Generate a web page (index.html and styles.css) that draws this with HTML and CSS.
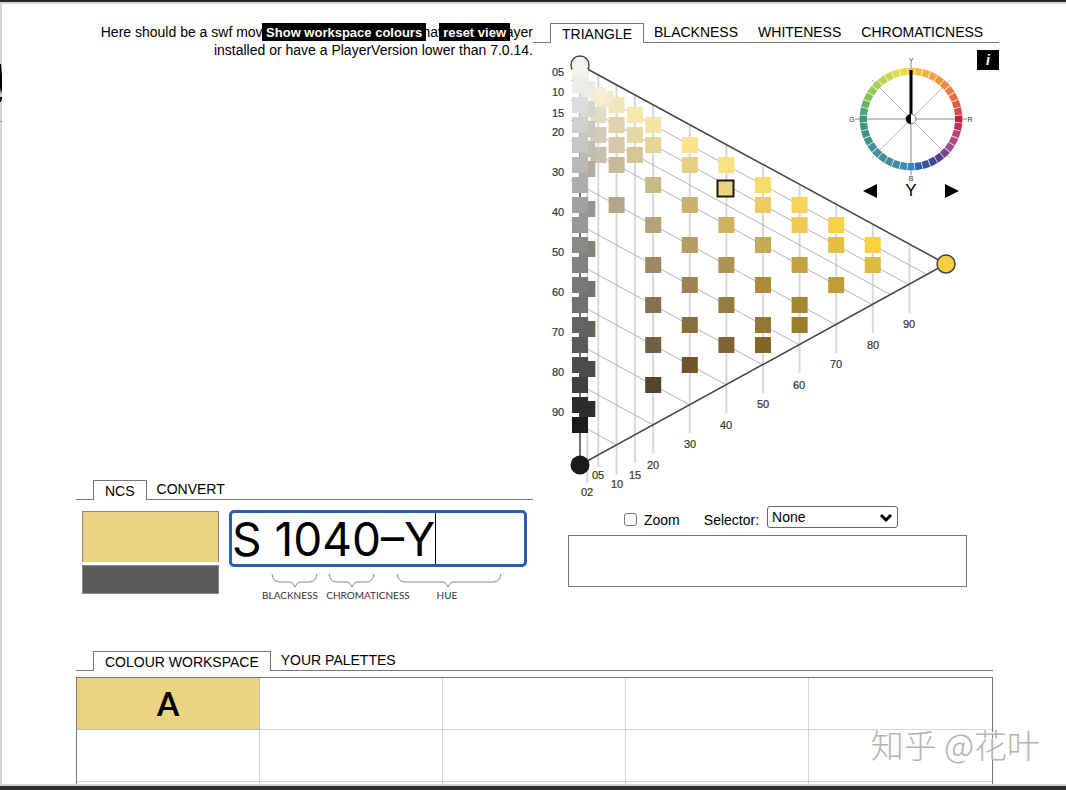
FILE: index.html
```
<!DOCTYPE html>
<html lang="en">
<head>
<meta charset="utf-8">
<title>Colour navigator</title>
<link rel="stylesheet" href="styles.css">
</head>
<body>
<div class="window">
  <main class="page">
    <div class="columns">
      <section class="left">
        <div class="notice">
          <p class="notice-text">Here should be a swf movie, but you probably don't have Flash player<br>installed or have a PlayerVersion lower than 7.0.14.</p>
          <div class="notice-actions">
            <button class="black-button" type="button">Show workspace colours</button>
            <button class="black-button" type="button">reset view</button>
          </div>
        </div>
        <nav class="tabs">
          <a class="tab tab-active" href="#ncs">NCS</a>
          <a class="tab" href="#convert">CONVERT</a>
        </nav>
        <div class="notation">
          <div class="swatches">
            <div class="swatch swatch-colour"></div>
            <div class="swatch swatch-grey"></div>
          </div>
          <div class="entry">
            <div class="code-box">
              <input class="code-input" type="text" value="S 1040–Y" aria-label="NCS notation">
              <span class="caret"></span>
            </div>
            <svg class="braces" viewBox="229 570 298 32" role="img" aria-label="Parts of the notation">
              <g class="brace">
                <path d="M272 574q1 8 8 8h10q3 0 5 5q2-5 5-5h9q7 0 8-8"/>
                <path d="M329 574q1 8 8 8h10q3 0 5 5q2-5 5-5h9q7 0 8-8"/>
                <path d="M397 574q1 8 8 8h38q3 0 5 5q2-5 5-5h40q7 0 8-8"/>
              </g>
              <text x="290" y="599">BLACKNESS</text>
              <text x="368" y="599">CHROMATICNESS</text>
              <text x="447" y="599">HUE</text>
            </svg>
          </div>
        </div>
      </section>
      <section class="right">
        <nav class="tabs tabs-wide">
          <a class="tab tab-active" href="#triangle">TRIANGLE</a>
          <a class="tab" href="#blackness">BLACKNESS</a>
          <a class="tab" href="#whiteness">WHITENESS</a>
          <a class="tab" href="#chromaticness">CHROMATICNESS</a>
        </nav>
        <div class="diagram">
          <svg class="triangle" id="triangle" viewBox="533 43 466 457" role="img" aria-label="NCS colour triangle"></svg>
          <button class="info" type="button" aria-label="Information">i</button>
          <div class="hue">
            <svg class="wheel" id="wheel" viewBox="-62 -63 124 126" role="img" aria-label="NCS colour circle"></svg>
            <div class="hue-nav">
              <button class="arrow" type="button" aria-label="Previous hue"><svg viewBox="0 0 14 14"><path d="M0 7 14 0v14z"/></svg></button>
              <span>Y</span>
              <button class="arrow" type="button" aria-label="Next hue"><svg viewBox="0 0 14 14"><path d="M14 7 0 0v14z"/></svg></button>
            </div>
          </div>
        </div>
        <div class="options">
          <label class="check"><input type="checkbox">Zoom</label>
          <label class="selector-label" for="selector">Selector:</label>
          <span class="select-wrap">
            <select id="selector"><option>None</option></select>
            <svg viewBox="0 0 14 10"><path d="M2 2l5 5 5-5"/></svg>
          </span>
        </div>
        <div class="result"></div>
      </section>
    </div>
    <section class="workspace">
      <nav class="tabs">
        <a class="tab tab-active" href="#workspace">COLOUR WORKSPACE</a>
        <a class="tab" href="#palettes">YOUR PALETTES</a>
      </nav>
      <table class="cells">
        <tr><td class="filled">A</td><td></td><td></td><td></td><td></td></tr>
        <tr><td></td><td></td><td></td><td></td><td></td></tr>
        <tr><td></td><td></td><td></td><td></td><td></td></tr>
      </table>
    </section>
  </main>
  <svg class="edge" viewBox="0 0 3 70" aria-hidden="true"><path class="edge-ink" d="M0 4h1l1 12v14l-1 4-1-6zM0 37h2v2l-1 3H0z"/><path class="edge-line" d="M0 61.500h2"/></svg>
  <div class="watermark" lang="zh">知乎 @花叶</div>
</div>
<script src="diagram.js"></script>
</body>
</html>
```
FILE: styles.css
```
* { box-sizing: border-box; }
body {
  margin: 0;
  background: #fff;
  color: #000;
  font-family: "Liberation Sans", Arial, sans-serif;
  font-size: 14px;
}
button, input, select { font: inherit; color: inherit; }
a { color: inherit; text-decoration: none; }
.window {
  position: relative;
  height: 100vh;
  display: flex;
  flex-direction: column;
  border-top: 2px solid #2c2a29;
  border-bottom: 4px solid #2f302f;
}
.page {
  flex: 1;
  min-height: 0;
  overflow: hidden;
  border: solid #d6d5d2;
  border-width: 2px 0 2px 2px;
  padding: 19px 67px 0 74px;
}
.columns {
  display: grid;
  grid-template-columns: 457fr 466fr;
  align-items: start;
}
.notice {
  position: relative;
  min-height: 457px;
  text-align: right;
}
.notice-text { margin: 0; line-height: 18px; white-space: nowrap; }
.notice-actions {
  position: absolute;
  top: 0;
  right: 23px;
  display: flex;
  gap: 13px;
}
.black-button {
  border: 0;
  padding: 0 4px;
  height: 18px;
  background: #000;
  color: #fff;
  font-size: 13px;
  font-weight: 700;
  white-space: nowrap;
}
.tabs {
  display: flex;
  height: 20px;
  padding-left: 17px;
  border-bottom: 1px solid #777;
  line-height: 18px;
}
.tab { padding: 0 10px; height: 19px; white-space: nowrap; }
.tab-active {
  height: 20px;
  padding: 0 11px;
  border: 1px solid #777;
  border-bottom: 0;
  background: #fff;
  line-height: 20px;
}
.notation {
  display: grid;
  grid-template-columns: 137px 1fr;
  gap: 10px;
  padding: 10px 6px 0;
}
.swatches { padding-top: 1px; }
.swatch { border: 1px solid #888; }
.swatch-colour { height: 51px; background: #ebd383; border-bottom: 0; }
.swatch-grey { height: 29px; margin-top: 3px; background: #5c5b59; }
.code-box { position: relative; }
.code-input {
  display: block;
  width: 100%;
  height: 57px;
  border: 3px solid #2a5db0;
  border-radius: 5px;
  padding: 0;
  background: #fff;
  font-family: Inter, sans-serif;
  font-size: 46px;
}
.caret {
  position: absolute;
  left: 206px;
  top: 3px;
  bottom: 3px;
  width: 1px;
  background: #000;
}
.braces { display: block; width: 298px; height: 32px; margin-top: 3px; }
.braces text { font: 10px Lato, sans-serif; text-anchor: middle; fill: #333; }
.brace { fill: none; stroke: #888; }
.diagram { position: relative; height: 457px; }
.triangle { display: block; width: 466px; height: 457px; }
.triangle text { font: 11px "Liberation Sans", Arial, sans-serif; text-anchor: middle; fill: #333; stroke: #333; stroke-width: .2; }
.vertical { stroke: #d8d8d8; stroke-width: 2; }
.slanted { stroke: #b4b4b4; stroke-width: 1; }
.tick { stroke: #aaa; }
.outline { fill: none; stroke: #444; stroke-width: 1.5; }
.info {
  position: absolute;
  top: 7px;
  right: 0;
  width: 22px;
  height: 20px;
  border: 0;
  padding: 0;
  background: #000;
  color: #fff;
  font-weight: 700;
  font-style: italic;
}
.hue { position: absolute; top: 13px; right: 26px; width: 124px; }
.wheel { display: block; width: 124px; height: 126px; }
.wheel text { font: 7px "Liberation Sans", Arial, sans-serif; text-anchor: middle; fill: #333; }
.hue-nav {
  display: flex;
  justify-content: space-between;
  align-items: center;
  padding: 0 14px;
  height: 18px;
  font-size: 17px;
}
.arrow { border: 0; padding: 0; background: none; width: 14px; height: 14px; }
.arrow svg { display: block; width: 14px; height: 14px; }
.options { display: flex; align-items: center; height: 34px; padding-left: 91px; }
.check { display: flex; align-items: center; gap: 7px; margin-right: 24px; }
.check, .selector-label { padding-top: 5px; }
.check input {
  appearance: none;
  width: 13px;
  height: 13px;
  margin: 0;
  border: 1px solid #767676;
  border-radius: 3px;
  background: #fff;
}
.select-wrap { position: relative; margin-left: 8px; }
.select-wrap svg { position: absolute; right: 5px; top: 7px; width: 14px; height: 10px; fill: none; stroke: #000; stroke-width: 3; pointer-events: none; }
.select-wrap select {
  appearance: none;
  display: block;
  width: 131px;
  height: 22px;
  border: 1px solid #666;
  border-radius: 3px;
  padding: 0 4px;
  background: #fff;
}
.result { height: 52px; margin: 1px 32px 0 35px; border: 1px solid #777; }
.workspace { margin-right: 6px; padding-top: 49px; }
.cells {
  width: 100%;
  margin-top: 6px;
  table-layout: fixed;
  border-collapse: separate;
  border-spacing: 0;
  border: 1px solid #777;
}
.cells td {
  height: 52px;
  padding: 0;
  border: solid #d4d4d4;
  border-width: 0 1px 1px 0;
  text-align: center;
  font: 700 32px/50px Lato, sans-serif;
}
.cells td:last-child { border-right: 0; }
.cells .filled { background: #ebd383; border-color: #bbb; }
.edge { position: absolute; left: 0; top: 58px; width: 3px; height: 70px; }
.edge-ink { fill: #000; }
.edge-line { stroke: #888; }
.watermark {
  position: absolute;
  right: 26px;
  bottom: 22px;
  color: #b4b4b4;
  font: 300 33px/40px "Noto Sans CJK SC", sans-serif;
  text-shadow: 1px -1px 0 #fff, 2px -1px 0 #fff;
}
```
FILE: diagram.js
```
// Draws the NCS triangle and the colour circle.
const ORIGIN = { x: 580, y: 65 };
const place = (s, c) => [ORIGIN.x + c * 3.66, ORIGIN.y + s * 4 + c * 2];

// chromaticness: { blackness: colour }
const samples = {
  0: { 3: '#f5f2ec', 5: '#ececea', 10: '#dcdcdc', 15: '#cfcfcf', 20: '#c5c5c6', 25: '#b9b9ba', 30: '#adadad', 35: '#a1a1a2', 40: '#979798', 45: '#8a8a8b', 50: '#828283', 55: '#78787a', 60: '#707072', 65: '#646466', 70: '#5a5a5b', 75: '#4b4b4c', 80: '#404040', 85: '#2c2c2d', 90: '#1b1b1b' },
  2: { 5: '#eeebe4', 10: '#d8d5cf', 15: '#c9c6c0', 20: '#bfbcb5', 25: '#b0aca5', 35: '#98958f', 45: '#85827b', 55: '#75736c', 65: '#64625b', 75: '#4c4a46', 85: '#302e2a' },
  5: { 5: '#f6eed7', 10: '#e3dcc9', 15: '#d3ccba', 20: '#c8c0ae' },
  7: { 5: '#f5ebc9' },
  10: { 5: '#f3e6bd', 10: '#dfd3ae', 15: '#d4c8a8', 20: '#c9bb99', 30: '#b5a68a' },
  15: { 5: '#f8e8a9', 10: '#e5d8a8', 15: '#d5c793' },
  20: { 5: '#f5e4a5', 10: '#e5d595', 20: '#c9bb88', 30: '#b2a474', 40: '#9c8a62', 50: '#85734f', 60: '#716041', 70: '#53452b' },
  30: { 5: '#f9e38d', 10: '#e4cf82', 20: '#c9b16d', 30: '#b29c61', 40: '#9c8351', 50: '#85703b', 60: '#6f5529' },
  40: { 5: '#fbe180', 20: '#d0b263', 30: '#ad9451', 40: '#987b3e', 50: '#806431' },
  50: { 5: '#f8da6d', 10: '#eacb64', 20: '#c5a953', 30: '#ae8b39', 40: '#957634', 45: '#826827' },
  60: { 5: '#f9d45c', 10: '#edca55', 20: '#c3a141', 30: '#a58635', 35: '#9c7d2b' },
  70: { 5: '#f8d144', 10: '#e4bf43', 20: '#c09c34' },
  80: { 5: '#fad13f', 10: '#debb42' }
};

const line = (a, b, cls) => `<path class="${cls}" d="M${a}L${b}"/>`;
const tails = { 2: 22, 5: 12, 10: 30, 15: 28 };
let out = '';
for (const c of [2, 5, 10, 15, 20, 30, 40, 50, 60, 70, 80, 90]) {
  const end = place(100 - c, c);
  out += line(place(0, c), [end[0], end[1] + (tails[c] || 28)], 'vertical');
}
for (const s of [5, 10, 15, 20, 30, 40, 50, 60, 70, 80, 90]) {
  out += line(place(s, 0), place(s, 100 - s), 'slanted');
  out += line([571, 60.5 + s * 4], [580, 60.5 + s * 4], 'tick');
  out += `<text x="558" y="${56 + s * 4 + (s === 15 ? 1 : 0)}">${String(s).padStart(2, '0')}</text>`;
}
out += '<path class="outline" d="M580 65 946 264 580 465z"/><circle class="outline" cx="580" cy="65" r="9"/>';
for (const c of Object.keys(samples).map(Number).sort((a, b) => b - a)) {
  for (const [s, fill] of Object.entries(samples[c])) {
    const [x, y] = place(Number(s), c);
    out += `<rect x="${x - 8}" y="${y - 8}" width="16" height="16" fill="${fill}"/>`;
  }
}
out += '<circle cx="580" cy="65" r="8" fill="#f4f2ed"/>';
out += '<rect x="717.500" y="180.500" width="16" height="16" fill="#ebd383" stroke="#1c1a12" stroke-width="2"/>';
out += '<circle cx="946" cy="264" r="9" fill="#f6cf45" stroke="#444" stroke-width="1.500"/><circle cx="580" cy="465" r="9.500" fill="#1b1b1b"/>';
const labels = { 2: [587, 492], 5: [598, 475], 10: [617, 484], 15: [635, 475], 20: [653, 465], 30: [690, 444], 40: [726, 425], 50: [763, 404], 60: [799, 385], 70: [836, 364], 80: [873, 345], 90: [909, 324] };
for (const [c, [x, y]] of Object.entries(labels)) {
  out += `<text x="${x}" y="${y + 4}">${c.padStart(2, '0')}</text>`;
}
document.getElementById('triangle').innerHTML = out;

const hues = ['#f6c53a', '#f5bd42', '#f3b044', '#f0a344', '#ee9744', '#ec8b42', '#eb7d42', '#e86d42', '#e45d42', '#dc4c4c', '#bf2245',
  '#bd2f5a', '#bb4576', '#b04a85', '#a04c8c', '#7c4488', '#54408a', '#3f4796', '#34549f', '#2d62ad', '#3785bd',
  '#3e8ab0', '#418ca8', '#428da2', '#42909f', '#41919a', '#3f9292', '#3d948c', '#3c9684', '#3b997c', '#379b70',
  '#4aa66c', '#62b463', '#7bc25b', '#94ca55', '#a9cf51', '#bbd34e', '#cbd850', '#dbdc52', '#ecd94a'];
let wheel = '';
for (const [a, b, colour] of [[-56, 0, '#888'], [0, -56, '#888'], [-39, -39, '#bbb'], [-39, 39, '#bbb']]) {
  wheel += `<path stroke="${colour}" d="M${a} ${b}L${-a} ${-b}"/>`;
}
hues.forEach((fill, i) => {
  wheel += `<path transform="rotate(${i * 9})" d="M-3.700-51.300h7.400l-.6 7.300h-6.200z" fill="${fill}"/>`;
});
wheel += '<path d="M0 0V-49" stroke="#000" stroke-width="3"/><circle r="5" fill="#fff" stroke="#777"/><path d="M0-5a5 5 0 0 0 0 10z"/>';
wheel += '<text y="-56">Y</text><text y="62">B</text><text x="-59" y="3">G</text><text x="59" y="3">R</text>';
document.getElementById('wheel').innerHTML = wheel;
```
